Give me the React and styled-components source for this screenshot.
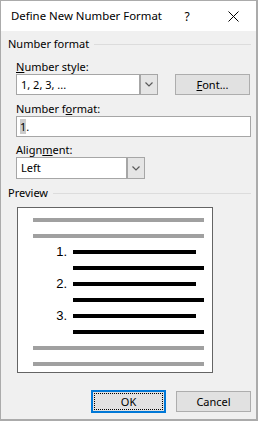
import React from 'react';
import styled, { createGlobalStyle } from 'styled-components';

const GlobalStyle = createGlobalStyle`
  html, body {
    margin: 0;
    padding: 0;
    background: #ffffff;
  }
  * {
    box-sizing: border-box;
  }
`;

const Window = styled.div`
  width: 258px;
  height: 421px;
  border: 1px solid #ababab;
  border-right-width: 2px;
  border-bottom-width: 2px;
  background: #f0f0f0;
  font-family: 'Noto Sans', 'Open Sans', sans-serif;
  font-size: 11px;
  color: #000;
  display: flex;
  flex-direction: column;
`;

const TitleBar = styled.div`
  height: 30px;
  background: #ffffff;
  display: flex;
  align-items: center;
  padding-left: 10px;
`;

const Title = styled.div`
  flex: 1;
  font-size: 11.4px;
  line-height: 30px;
`;

const TitleButton = styled.div`
  width: 46px;
  height: 30px;
  display: flex;
  align-items: center;
  justify-content: center;
  font-size: 12px;
`;

const Body = styled.div`
  flex: 1;
  padding: 0 5px 0 7px;
  display: flex;
  flex-direction: column;
`;

const GroupHeader = styled.div`
  margin-top: ${p => p.$top}px;
  height: 14px;
  line-height: 14px;
  display: flex;
  align-items: center;
  gap: 5px;
  &::after {
    content: '';
    flex: 1;
    height: 1px;
    background: #dcdcdc;
  }
`;

const Group = styled.div`
  padding-left: 8px;
  display: flex;
  flex-direction: column;
`;

const Label = styled.div`
  margin-top: ${p => p.$top}px;
  height: ${p => p.$h}px;
  line-height: ${p => p.$h}px;
  u {
    text-decoration-thickness: 1px;
    text-underline-offset: 1px;
  }
`;

const Row = styled.div`
  display: flex;
  gap: 17px;
`;

const Combo = styled.div`
  width: ${p => p.$w}px;
  height: ${p => p.$h}px;
  display: flex;
  border: 1px solid #a6a6a6;
  background: #fff;
`;

const ComboText = styled.div`
  flex: 1;
  padding-left: 4px;
  line-height: ${p => p.$h - 2}px;
`;

const ComboArrow = styled.div`
  width: 18px;
  background: #e5e5e5;
  border-left: 2px solid #a6a6a6;
  display: flex;
  align-items: center;
  justify-content: center;
`;

const Button = styled.div`
  width: 75px;
  height: ${p => (p.$default ? 23 : 21)}px;
  background: #e1e1e1;
  border: ${p => (p.$default ? '2px solid #0078d7' : '1px solid #adadad')};
  display: flex;
  align-items: center;
  justify-content: center;
  position: relative;
  u {
    text-decoration-thickness: 1px;
    text-underline-offset: 1px;
  }
`;

const FocusRing = styled.div`
  position: absolute;
  inset: 1px;
  border: 1px dotted #000;
`;

const TextBox = styled.div`
  height: 21px;
  border: 1px solid #a6a6a6;
  background: #fff;
  padding-left: 3px;
  line-height: 19px;
`;

const Selected = styled.span`
  background: #cccccc;
`;

const PreviewBox = styled.div`
  margin: 7px 0 0 9px;
  width: 196px;
  height: 166px;
  border: 1px solid #646464;
  background: #fff;
  padding: 10px 0 0 15px;
  display: flex;
  flex-direction: column;
  gap: 12px;
`;

const Bar = styled.div`
  height: 4px;
  width: ${p => p.$w}px;
  margin-left: ${p => p.$indent || 0}px;
  background: ${p => (p.$dark ? '#000' : '#a0a0a0')};
`;

const Item = styled.div`
  display: flex;
  align-items: center;
  height: 4px;
`;

const ItemNumber = styled.div`
  width: 40px;
  padding-right: 6px;
  text-align: right;
  font-family: 'Liberation Sans', Arial, sans-serif;
  font-size: 13px;
  line-height: 4px;
  color: #000;
`;

const Buttons = styled.div`
  margin-top: 17px;
  display: flex;
  justify-content: flex-end;
  align-items: center;
  gap: 10px;
`;

const Chevron = () => (
  <svg width="8" height="5" viewBox="0 0 8 5">
    <polyline points="0.5,0.5 4,4 7.5,0.5" fill="none" stroke="#5a5a5a" strokeWidth="1.2" />
  </svg>
);

const CloseIcon = () => (
  <svg width="11" height="11" viewBox="0 0 11 11">
    <path d="M0.5 0.5 L10.5 10.5 M10.5 0.5 L0.5 10.5" stroke="#000" strokeWidth="1" />
  </svg>
);

const items = ['1.', '2.', '3.'];

export default function App() {
  return (
    <Window>
      <GlobalStyle />
      <TitleBar>
        <Title>Define New Number Format</Title>
        <TitleButton>?</TitleButton>
        <TitleButton><CloseIcon /></TitleButton>
      </TitleBar>
      <Body>
        <GroupHeader $top={6}>Number format</GroupHeader>
        <Group>
          <Label $top={9} $h={14}><u>N</u>umber style:</Label>
          <Row>
            <Combo $w={142} $h={21}>
              <ComboText $h={21}>1, 2, 3, ...</ComboText>
              <ComboArrow><Chevron /></ComboArrow>
            </Combo>
            <Button><span><u>F</u>ont...</span></Button>
          </Row>
          <Label $top={6} $h={15}>Number f<u>o</u>rmat:</Label>
          <TextBox><Selected>1</Selected>.</TextBox>
          <Label $top={5} $h={15}>Align<u>m</u>ent:</Label>
          <Combo $w={129} $h={22}>
            <ComboText $h={22}>Left</ComboText>
            <ComboArrow><Chevron /></ComboArrow>
          </Combo>
        </Group>
        <GroupHeader $top={7}>Preview</GroupHeader>
        <PreviewBox>
          <Bar $w={171} />
          <Bar $w={171} />
          {items.map(n => (
            <React.Fragment key={n}>
              <Item>
                <ItemNumber>{n}</ItemNumber>
                <Bar $dark $w={123} />
              </Item>
              <Bar $dark $w={131} $indent={40} />
            </React.Fragment>
          ))}
          <Bar $w={171} />
          <Bar $w={171} />
        </PreviewBox>
        <Buttons>
          <Button $default><FocusRing />OK</Button>
          <Button>Cancel</Button>
        </Buttons>
      </Body>
    </Window>
  );
}
